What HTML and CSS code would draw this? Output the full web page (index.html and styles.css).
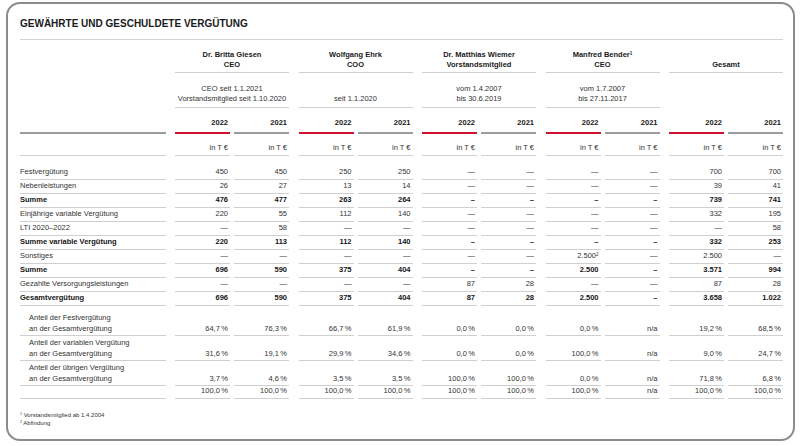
FILE: index.html
```html
<!DOCTYPE html>
<html lang="de">
<head>
<meta charset="utf-8">
<title>Gewährte und geschuldete Vergütung</title>
<link rel="stylesheet" href="styles.css">
</head>
<body>
<div class="frame">
  <h1 class="title">GEWÄHRTE UND GESCHULDETE VERGÜTUNG</h1>

  <div class="row names">
    <div class="lbl"></div>
    <div class="grp"><div class="hc"><span>Dr. Britta Giesen<br>CEO</span></div></div>
    <div class="grp"><div class="hc"><span>Wolfgang Ehrk<br>COO</span></div></div>
    <div class="grp"><div class="hc"><span>Dr. Matthias Wiemer<br>Vorstandsmitglied</span></div></div>
    <div class="grp"><div class="hc"><span>Manfred Bender<sup>1</sup><br>CEO</span></div></div>
    <div class="grp"><div class="hc"><span>Gesamt</span></div></div>
  </div>

  <div class="row dates">
    <div class="lbl"></div>
    <div class="grp"><div class="dc"><span>CEO seit 1.1.2021<br>Vorstandsmitglied seit 1.10.2020</span></div></div>
    <div class="grp"><div class="dc"><span>seit 1.1.2020</span></div></div>
    <div class="grp"><div class="dc"><span>vom 1.4.2007<br>bis 30.6.2019</span></div></div>
    <div class="grp"><div class="dc"><span>vom 1.7.2007<br>bis 27.11.2017</span></div></div>
    <div class="grp"><div class="dc empty"></div></div>
  </div>

  <div class="row years">
    <div class="lbl"></div>
    <div class="grp"><span class="c cur">2022</span><span class="c">2021</span></div>
    <div class="grp"><span class="c cur">2022</span><span class="c">2021</span></div>
    <div class="grp"><span class="c cur">2022</span><span class="c">2021</span></div>
    <div class="grp"><span class="c cur">2022</span><span class="c">2021</span></div>
    <div class="grp"><span class="c cur">2022</span><span class="c">2021</span></div>
  </div>

  <div class="row unit">
    <div class="lbl"></div>
    <div class="grp"><span class="c">in T €</span><span class="c">in T €</span></div>
    <div class="grp"><span class="c">in T €</span><span class="c">in T €</span></div>
    <div class="grp"><span class="c">in T €</span><span class="c">in T €</span></div>
    <div class="grp"><span class="c">in T €</span><span class="c">in T €</span></div>
    <div class="grp"><span class="c">in T €</span><span class="c">in T €</span></div>
  </div>

  <div class="data">
    <div class="row">
      <div class="lbl">Festvergütung</div>
      <div class="grp"><span class="c">450</span><span class="c">450</span></div>
      <div class="grp"><span class="c">250</span><span class="c">250</span></div>
      <div class="grp"><span class="c">—</span><span class="c">—</span></div>
      <div class="grp"><span class="c">—</span><span class="c">—</span></div>
      <div class="grp"><span class="c">700</span><span class="c">700</span></div>
    </div>
    <div class="row">
      <div class="lbl">Nebenleistungen</div>
      <div class="grp"><span class="c">26</span><span class="c">27</span></div>
      <div class="grp"><span class="c">13</span><span class="c">14</span></div>
      <div class="grp"><span class="c">—</span><span class="c">—</span></div>
      <div class="grp"><span class="c">—</span><span class="c">—</span></div>
      <div class="grp"><span class="c">39</span><span class="c">41</span></div>
    </div>
    <div class="row b">
      <div class="lbl">Summe</div>
      <div class="grp"><span class="c">476</span><span class="c">477</span></div>
      <div class="grp"><span class="c">263</span><span class="c">264</span></div>
      <div class="grp"><span class="c">–</span><span class="c">–</span></div>
      <div class="grp"><span class="c">–</span><span class="c">–</span></div>
      <div class="grp"><span class="c">739</span><span class="c">741</span></div>
    </div>
    <div class="row">
      <div class="lbl">Einjährige variable Vergütung</div>
      <div class="grp"><span class="c">220</span><span class="c">55</span></div>
      <div class="grp"><span class="c">112</span><span class="c">140</span></div>
      <div class="grp"><span class="c">—</span><span class="c">—</span></div>
      <div class="grp"><span class="c">—</span><span class="c">—</span></div>
      <div class="grp"><span class="c">332</span><span class="c">195</span></div>
    </div>
    <div class="row">
      <div class="lbl">LTI 2020–2022</div>
      <div class="grp"><span class="c">—</span><span class="c">58</span></div>
      <div class="grp"><span class="c">—</span><span class="c">—</span></div>
      <div class="grp"><span class="c">—</span><span class="c">—</span></div>
      <div class="grp"><span class="c">—</span><span class="c">—</span></div>
      <div class="grp"><span class="c">—</span><span class="c">58</span></div>
    </div>
    <div class="row b">
      <div class="lbl">Summe variable Vergütung</div>
      <div class="grp"><span class="c">220</span><span class="c">113</span></div>
      <div class="grp"><span class="c">112</span><span class="c">140</span></div>
      <div class="grp"><span class="c">–</span><span class="c">–</span></div>
      <div class="grp"><span class="c">–</span><span class="c">–</span></div>
      <div class="grp"><span class="c">332</span><span class="c">253</span></div>
    </div>
    <div class="row">
      <div class="lbl">Sonstiges</div>
      <div class="grp"><span class="c">—</span><span class="c">—</span></div>
      <div class="grp"><span class="c">—</span><span class="c">—</span></div>
      <div class="grp"><span class="c">—</span><span class="c">—</span></div>
      <div class="grp"><span class="c">2.500<sup>2</sup></span><span class="c">—</span></div>
      <div class="grp"><span class="c">2.500</span><span class="c">—</span></div>
    </div>
    <div class="row b">
      <div class="lbl">Summe</div>
      <div class="grp"><span class="c">696</span><span class="c">590</span></div>
      <div class="grp"><span class="c">375</span><span class="c">404</span></div>
      <div class="grp"><span class="c">–</span><span class="c">–</span></div>
      <div class="grp"><span class="c">2.500</span><span class="c">–</span></div>
      <div class="grp"><span class="c">3.571</span><span class="c">994</span></div>
    </div>
    <div class="row">
      <div class="lbl">Gezahlte Versorgungsleistungen</div>
      <div class="grp"><span class="c">—</span><span class="c">—</span></div>
      <div class="grp"><span class="c">—</span><span class="c">—</span></div>
      <div class="grp"><span class="c">87</span><span class="c">28</span></div>
      <div class="grp"><span class="c">—</span><span class="c">—</span></div>
      <div class="grp"><span class="c">87</span><span class="c">28</span></div>
    </div>
    <div class="row b">
      <div class="lbl">Gesamtvergütung</div>
      <div class="grp"><span class="c">696</span><span class="c">590</span></div>
      <div class="grp"><span class="c">375</span><span class="c">404</span></div>
      <div class="grp"><span class="c">87</span><span class="c">28</span></div>
      <div class="grp"><span class="c">2.500</span><span class="c">–</span></div>
      <div class="grp"><span class="c">3.658</span><span class="c">1.022</span></div>
    </div>
  </div>

  <div class="shares">
    <div class="row share">
      <div class="lbl">Anteil der Festvergütung<br>an der Gesamtvergütung</div>
      <div class="grp"><span class="c">64,7&#8201;%</span><span class="c">76,3&#8201;%</span></div>
      <div class="grp"><span class="c">66,7&#8201;%</span><span class="c">61,9&#8201;%</span></div>
      <div class="grp"><span class="c">0,0&#8201;%</span><span class="c">0,0&#8201;%</span></div>
      <div class="grp"><span class="c">0,0&#8201;%</span><span class="c">n/a</span></div>
      <div class="grp"><span class="c">19,2&#8201;%</span><span class="c">68,5&#8201;%</span></div>
    </div>
    <div class="row share">
      <div class="lbl">Anteil der variablen Vergütung<br>an der Gesamtvergütung</div>
      <div class="grp"><span class="c">31,6&#8201;%</span><span class="c">19,1&#8201;%</span></div>
      <div class="grp"><span class="c">29,9&#8201;%</span><span class="c">34,6&#8201;%</span></div>
      <div class="grp"><span class="c">0,0&#8201;%</span><span class="c">0,0&#8201;%</span></div>
      <div class="grp"><span class="c">100,0&#8201;%</span><span class="c">n/a</span></div>
      <div class="grp"><span class="c">9,0&#8201;%</span><span class="c">24,7&#8201;%</span></div>
    </div>
    <div class="row share">
      <div class="lbl">Anteil der übrigen Vergütung<br>an der Gesamtvergütung</div>
      <div class="grp"><span class="c">3,7&#8201;%</span><span class="c">4,6&#8201;%</span></div>
      <div class="grp"><span class="c">3,5&#8201;%</span><span class="c">3,5&#8201;%</span></div>
      <div class="grp"><span class="c">100,0&#8201;%</span><span class="c">100,0&#8201;%</span></div>
      <div class="grp"><span class="c">0,0&#8201;%</span><span class="c">n/a</span></div>
      <div class="grp"><span class="c">71,8&#8201;%</span><span class="c">6,8&#8201;%</span></div>
    </div>
    <div class="row total">
      <div class="lbl"></div>
      <div class="grp"><span class="c">100,0&#8201;%</span><span class="c">100,0&#8201;%</span></div>
      <div class="grp"><span class="c">100,0&#8201;%</span><span class="c">100,0&#8201;%</span></div>
      <div class="grp"><span class="c">100,0&#8201;%</span><span class="c">100,0&#8201;%</span></div>
      <div class="grp"><span class="c">100,0&#8201;%</span><span class="c">n/a</span></div>
      <div class="grp"><span class="c">100,0&#8201;%</span><span class="c">100,0&#8201;%</span></div>
    </div>
  </div>

  <div class="notes">
    <p><sup>1</sup> Vorstandsmitglied ab 1.4.2004</p>
    <p><sup>2</sup> Abfindung</p>
  </div>
</div>
</body>
</html>
```

FILE: styles.css
```css
* {
  box-sizing: border-box;
  margin: 0;
  padding: 0;
}

body {
  margin: 0;
  background: #ffffff;
  font-family: "Liberation Sans", Arial, sans-serif;
  font-size: 7.5px;
  line-height: 10px;
  color: #333333;
}

.frame {
  margin: 2px 0 0 6px;
  width: 789px;
  height: 439px;
  border: 2px solid #8c8c8c;
  border-radius: 14px;
  padding: 0 10px 0 12px;
  overflow: hidden;
}

.title {
  font-size: 10px;
  line-height: 12px;
  font-weight: bold;
  color: #1a1a1a;
  padding: 14px 0 9px;
  border-bottom: 1px solid #d4d4d4;
}

.row {
  display: flex;
  gap: 9.5px;
}

.lbl {
  width: 145.5px;
  flex: none;
}

.grp {
  display: flex;
  gap: 4px;
  width: 114px;
  flex: none;
}

.c {
  width: 55px;
  flex: none;
  text-align: right;
  padding-right: 2px;
  border-bottom: 1px solid #cfcfcf;
  white-space: nowrap;
}

/* header: names */
.names {
  margin-top: 10px;
}

.hc {
  width: 114px;
  min-height: 23px;
  display: flex;
  flex-direction: column;
  justify-content: flex-end;
  text-align: center;
  font-weight: bold;
  color: #1a1a1a;
  padding-bottom: 2px;
  border-bottom: 1px solid #cfcfcf;
}

/* header: dates */
.dc {
  width: 114px;
  min-height: 35px;
  display: flex;
  flex-direction: column;
  justify-content: flex-end;
  text-align: center;
  padding: 11px 0 3px;
  border-bottom: 1px solid #cfcfcf;
}

.dc.empty {
  border-bottom-color: transparent;
}

/* header: years */
.years .c {
  font-weight: bold;
  color: #1a1a1a;
  padding-top: 10px;
  padding-bottom: 4px;
  border-bottom: 2px solid #9c9c9c;
}

.years .c.cur {
  border-bottom-color: #cf1130;
}

.years .lbl {
  border-bottom: 2px solid #9c9c9c;
}

/* header: unit */
.unit .c {
  padding-top: 9px;
  padding-bottom: 2px;
}

.unit .lbl {
  border-bottom: 1px solid #cfcfcf;
}

/* data rows */
.data {
  margin-top: 10px;
}

.data .lbl,
.data .c {
  padding-top: 1px;
  padding-bottom: 2px;
}

.data .lbl {
  border-bottom: 1px solid #cfcfcf;
}

.row.b {
  font-weight: bold;
  color: #151515;
}

/* share rows */
.shares {
  margin-top: 5px;
}

.share .lbl,
.share .c {
  line-height: 11px;
  padding-top: 1px;
  padding-bottom: 1px;
}

.share .lbl {
  padding-left: 9px;
  border-bottom: 1px solid #cfcfcf;
}

.share .c {
  display: flex;
  align-items: flex-end;
  justify-content: flex-end;
}

.total .c,
.total .lbl {
  padding-top: 0;
  padding-bottom: 2px;
}

.total .lbl {
  border-bottom: 1px solid #cfcfcf;
}

sup {
  font-size: 0.6em;
  line-height: 0;
  vertical-align: 0.55em;
}

/* footnotes */
.notes {
  margin-top: 12px;
  font-size: 6px;
  line-height: 8px;
  color: #333333;
}
```
